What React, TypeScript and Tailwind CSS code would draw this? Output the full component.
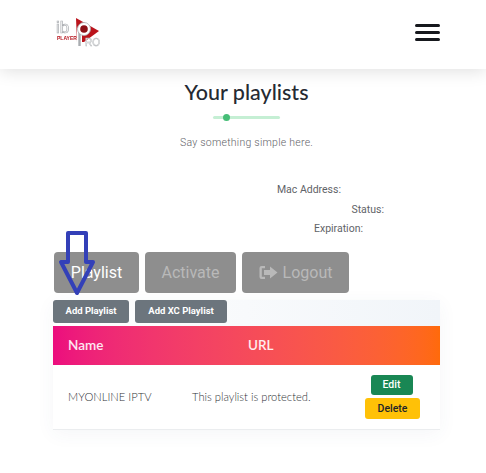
const Logo = () => (
  <svg width="44" height="30" viewBox="0 0 44 30" className="blur-[0.3px]">
    <path d="M20 1 L43 14 L28 25 L21 25 Z" fill="#bb141c" />
    <text x="0" y="15.5" fontSize="17" fontFamily="Liberation Sans, sans-serif" fill="#fff" stroke="#a9acb0" strokeWidth="0.7">ib</text>
    <rect x="1" y="18" width="19" height="5" fill="#fff" />
    <text x="1" y="22.5" fontSize="5" fontWeight="700" fontFamily="Liberation Sans, sans-serif" fill="#b5121b">PLAYER</text>
    <path d="M23.5 11 V29" stroke="#fff" strokeWidth="5" />
    <path d="M23.5 11 V29" stroke="#a9acb0" strokeWidth="2.4" />
    <circle cx="28" cy="12" r="6.5" fill="#fff" stroke="#a9acb0" strokeWidth="0.8" />
    <circle cx="28" cy="12" r="3.8" fill="#8c1016" />
    <text x="29" y="28.5" fontSize="10" fontFamily="Liberation Sans, sans-serif" fill="#fff" stroke="#b5b8bb" strokeWidth="0.5">RO</text>
  </svg>
);

const LogoutIcon = () => (
  <svg width="19" height="15" viewBox="0 0 19 15" fill="#b9b9b9">
    <path d="M6 1 H2.5 A2 2 0 0 0 .5 3 V12 A2 2 0 0 0 2.5 14 H6 V11.8 H2.8 V3.2 H6 Z" />
    <path d="M11 1.5 L18.5 7.5 L11 13.5 V10 H5 V5 H11 Z" />
  </svg>
);

export default function App() {
  return (
    <div className="relative w-[486px] h-[473px] overflow-hidden bg-white font-['Roboto',sans-serif]">
      <header className="h-[69px] bg-white shadow-[0_2px_16px_rgba(0,0,0,0.13)] flex items-center justify-between pl-[56px] pr-[46px] pb-[6px]">
        <Logo />
        <div className="flex flex-col gap-[4px] mt-[1px]">
          <span className="block w-[25px] h-[3px] rounded-sm bg-[#16181d]" />
          <span className="block w-[25px] h-[3px] rounded-sm bg-[#16181d]" />
          <span className="block w-[25px] h-[3px] rounded-sm bg-[#16181d]" />
        </div>
      </header>

      <section className="flex flex-col items-center pt-[9px] pl-[7px]">
        <h1 className="font-['Lato',sans-serif] font-medium text-[21.5px] leading-[28px] text-[#252a32]">Your playlists</h1>
        <div className="relative mt-[10px] w-[67px] h-[3px] rounded-full bg-[#c5efd4]">
          <span className="absolute left-[10px] top-[-2px] w-[7px] h-[7px] rounded-full bg-[#45bd76]" />
        </div>
        <p className="mt-[17px] text-[10.5px] leading-[14px] font-light tracking-[0.25px] text-[#5f6368]">Say something simple here.</p>
      </section>

      <div className="mt-[33px] flex flex-col items-end text-[10.5px] leading-[14px] text-[#5f6368]">
        <p className="mr-[145px]">Mac Address:</p>
        <p className="mr-[102px] mt-[6px]">Status:</p>
        <p className="mr-[123px] mt-[5px]">Expiration:</p>
      </div>

      <div className="mt-[16px] ml-[54px] flex gap-[6px]">
        <button className="w-[85px] h-[41px] rounded-[4px] bg-[#8e8e8e] text-white text-[16px]">Playlist</button>
        <button className="w-[91px] h-[41px] rounded-[4px] bg-[#8e8e8e] text-[#b9b9b9] text-[16px]">Activate</button>
        <button className="w-[107px] h-[41px] rounded-[4px] bg-[#8e8e8e] text-[#b9b9b9] text-[16px] flex items-center justify-center gap-[5px]">
          <LogoutIcon />
          Logout
        </button>
      </div>

      <div className="mt-[7px] ml-[53px] w-[387px] shadow-[0_4px_18px_rgba(60,80,120,0.05)]">
        <div className="h-[26px] flex gap-[6px] items-start bg-gradient-to-r from-white to-[#f1f5f9]">
          <button className="w-[76px] h-[23px] rounded-[3px] bg-[#6c757d] text-white text-[9.5px] font-bold">Add Playlist</button>
          <button className="w-[92px] h-[23px] rounded-[3px] bg-[#6c757d] text-white text-[9.5px] font-bold">Add XC Playlist</button>
        </div>
        <div className="h-[39px] flex items-center bg-gradient-to-r from-[#ec0c7e] to-[#ff6a0a] text-white/90 font-['Lato',sans-serif] font-semibold text-[13.5px]">
          <span className="ml-[15px] w-[180px]">Name</span>
          <span>URL</span>
        </div>
        <div className="h-[65px] flex items-center bg-white border-b border-[#ebedef] font-['Lato',sans-serif] font-light text-[11.2px] text-[#2f3338]">
          <span className="ml-[15px] w-[124px]">MYONLINE IPTV</span>
          <span className="w-[173px]">This playlist is protected.</span>
          <div className="flex flex-col items-center gap-[3px] w-[55px] font-['Roboto',sans-serif] font-medium text-[10.5px]">
            <button className="w-[42px] h-[20px] rounded-[3px] bg-[#198754] text-white -translate-x-[1px]">Edit</button>
            <button className="w-[55px] h-[21px] rounded-[3px] bg-[#ffc107] text-[#212529]">Delete</button>
          </div>
        </div>
      </div>

      {/* blue arrow drawn over the buttons */}
      <svg width="42" height="70" viewBox="0 0 42 70" className="absolute left-[57px] top-[230px]" fill="none">
        <path d="M11 3 H29 V32 H36 L20 63 L4 32 H11 Z" stroke="#3340b8" strokeWidth="4" strokeLinejoin="round" />
      </svg>
    </div>
  );
}
